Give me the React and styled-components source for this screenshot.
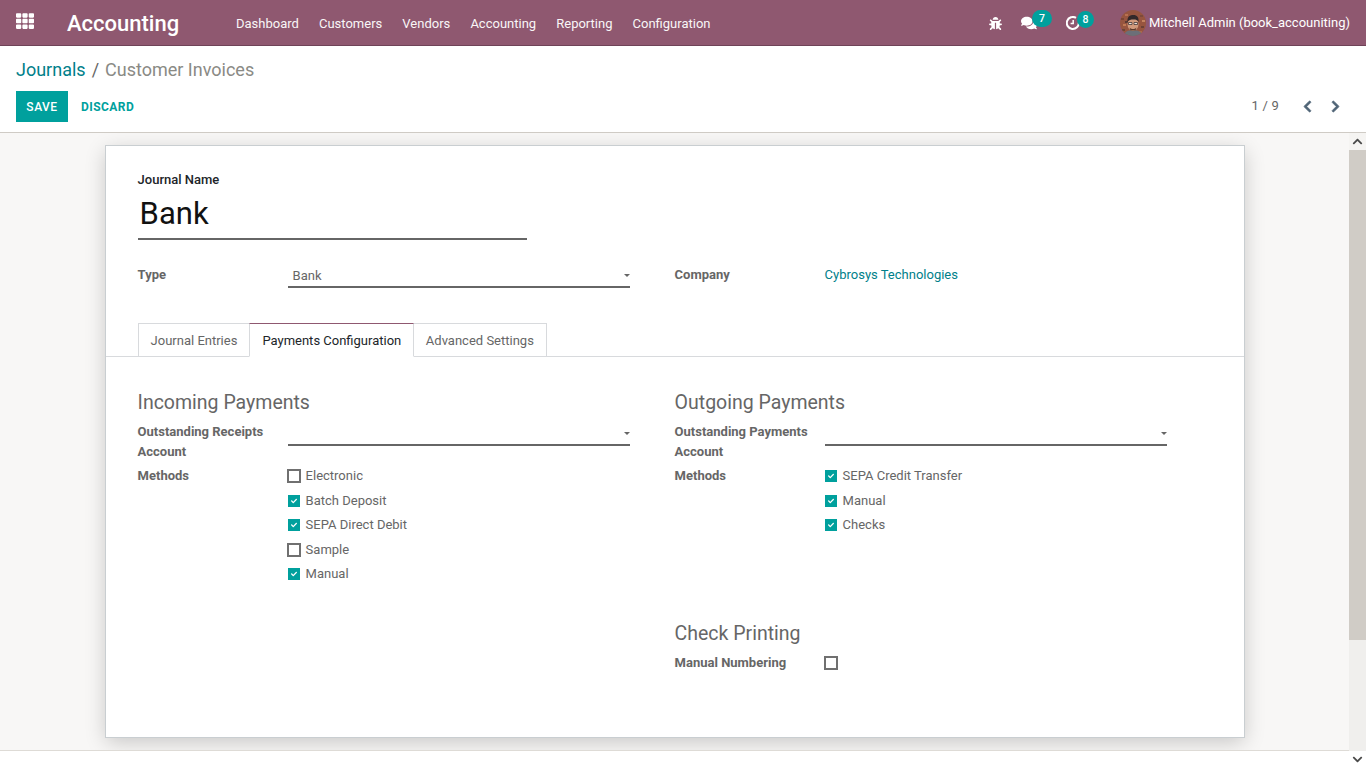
import React from 'react';
import styled, { createGlobalStyle } from 'styled-components';
import { FaTh, FaBug, FaComments, FaChevronLeft, FaChevronRight, FaChevronUp, FaChevronDown, FaCheck } from 'react-icons/fa';

const Global = createGlobalStyle`
  html, body { margin: 0; padding: 0; height: 100%; overflow: hidden; }
  body { font-family: Roboto, "Noto Sans", sans-serif; font-size: 13px; line-height: 20px; color: #666; background: #fff; }
  * { box-sizing: border-box; }
`;
const Page = styled.div`display: flex; flex-direction: column; height: 768px; width: 1366px;`;
const NavBar = styled.header`
  height: 46px; flex: none; display: flex; align-items: center; background: #8f5870; color: #fff;
  border-bottom: 1px solid #6f4358; padding: 0 16px;
`;
const AppGrid = styled.span`display: flex; font-size: 18px; width: 51px; margin-top: -3px;`;
const Brand = styled.span`font-size: 22px; font-weight: 500; width: 169px; margin-top: 2px;`;
const Menu = styled.nav`display: flex; gap: 20.1px; flex: 1; margin-top: 2px;`;
const MenuItem = styled.span`font-size: 13px; color: #fff; opacity: .95;`;
const Systray = styled.div`display: flex; align-items: center; margin-top: 1px;`;
const TrayIcon = styled.span`position: relative; display: flex; font-size: ${p => p.$size || 14}px; margin-right: ${p => p.$gap}px;`;
const Badge = styled.span`
  position: absolute; top: -5px; left: ${p => p.$left}px; min-width: ${p => p.$w}px; height: 17px; border-radius: 9px;
  background: #00a09d; color: #fff; font-size: 10.5px; font-weight: 500; line-height: 17px; text-align: center;
`;
const UserName = styled.span`font-size: 13px; margin-left: 3px; white-space: nowrap;`;

const ControlPanel = styled.section`
  height: 87px; flex: none; background: #fff; border-bottom: 1px solid #cfcbc5; padding: 0 16px;
  display: flex; flex-direction: column;
`;
const Breadcrumb = styled.div`font-size: 18px; line-height: 24px; margin-top: 12px; color: #8a8a85;`;
const Crumb = styled.span`color: #00808a;`;
const Sep = styled.span`color: #666; margin: 0 6px 0 6px;`;
const Actions = styled.div`display: flex; align-items: center; margin-top: 9px; height: 31px;`;
const SaveButton = styled.button`
  width: 52px; height: 31px; border: 0; background: #00a09d; color: #fff; font: 500 12px Roboto, sans-serif; letter-spacing: .5px; padding: 0;
`;
const DiscardButton = styled.button`
  margin-left: 13px; border: 0; background: none; color: #00a09d; font: 700 12px Roboto, sans-serif; padding: 0; letter-spacing: .45px;
`;
const Pager = styled.div`margin-left: auto; display: flex; align-items: center; color: #666; font-size: 13px; padding-right: 8px;`;
const PagerText = styled.span`margin-top: -2px; letter-spacing: .2px;`;
const PagerBtn = styled.span`
  display: flex; color: #4f6476; font-size: 13px; margin-left: ${p => p.$gap}px;
  svg { stroke: currentColor; stroke-width: 30; }
`;

const Body = styled.div`flex: 1; display: flex; min-height: 0;`;
const ContentArea = styled.main`flex: 1; background: #f8f7f6; border-bottom: 1px solid #dedbd6; padding: 12px 104px 0 105px; height: 618px; overflow: hidden;`;
const Scrollbar = styled.div`width: 17px; flex: none; background: #f0efed; display: flex; flex-direction: column; align-items: center;`;
const ScrollEnd = styled.span`height: 17px; flex: none; display: flex; align-items: center; justify-content: center; font-size: 11px; color: #4a4a4a; width: 100%; background: ${p => p.$bg || 'transparent'};`;
const ScrollThumb = styled.div`width: 100%; height: 490px; background: #d0ccc6;`;
const ScrollTrack = styled.div`flex: 1;`;
const LeftColumn = styled.div`flex: 1; display: flex; flex-direction: column;`;
const FooterStrip = styled.div`height: 17px; background: #fff;`;

const Sheet = styled.div`
  width: 1140px; height: 593px; background: #fff; border: 1px solid #c9ced1;
  box-shadow: 0 5px 20px -1px rgba(0,0,0,.2); padding-top: 24px;
`;
const Inset = styled.div`padding: 0 31.6px;`;
const NameLabel = styled.div`font-weight: 500; color: #212529; font-size: 13px;`;
const Title = styled.div`
  width: 389px; height: 50px; border-bottom: 2px solid #666; color: #111; font-size: 31px; line-height: 48px; padding-left: 2px;
`;
const TopGrid = styled.div`display: grid; grid-template-columns: 492px 492px; column-gap: 45px; margin-top: 25px; height: 48px;`;
const Row = styled.div`display: flex; align-items: flex-start;`;
const Label = styled.div`width: 150px; flex: none; font-weight: 700; color: #666; font-size: 13px;`;
const Select = styled.div`
  width: 342px; height: ${p => p.$h || 24}px; border-bottom: 2px solid #666; padding-left: 5px; padding-top: 1px; position: relative; color: #666;
`;
const Caret = styled.span`position: absolute; right: 0; bottom: 9.5px; width: 0; height: 0; border: 3.5px solid transparent; border-top-color: #666; border-bottom: 0;`;
const LinkValue = styled.span`color: #00808a;`;
const Tabs = styled.div`display: flex; padding-left: 32px; margin-top: 10px; border-bottom: 1px solid #d8dadd; height: 34px;`;
const Tab = styled.div`
  height: 34px; padding: 1px 12px 0 ${p => p.$active ? 12 : 11.6}px; display: flex; align-items: center; background: #fff; border: 1px solid #d8dadd;
  border-left-width: ${p => p.$first ? 1 : 0}px; color: ${p => p.$active ? '#212529' : '#666'};
  ${p => p.$active && `border-top-color: #8f5870; border-bottom-color: #fff; margin-left:-1px; border-left-width:1px;`}
`;
const TabBody = styled.div`padding: 32px 31.6px 0; display: grid; grid-template-columns: 492px 492px; column-gap: 45px;`;
const Column = styled.div`display: flex; flex-direction: column;`;
const Heading = styled.h2`margin: 0; font-weight: 400; font-size: 19.5px; line-height: 27px; color: #666;`;
const FormRow = styled.div`display: flex; margin-top: ${p => p.$mt || 0}px;`;
const Checks = styled.div`display: flex; flex-direction: column;`;
const CheckRow = styled.div`height: 24.5px; display: flex; align-items: flex-start; line-height: 20px;`;
const Box = styled.span`
  flex: none; display: flex; align-items: center; justify-content: center; color: #fff; font-size: 6px;
  width: ${p => p.$on ? 12 : 14}px; height: ${p => p.$on ? 12 : 14}px;
  margin: ${p => p.$on ? '4px 6px 0 0' : '3px 5px 0 -1px'};
  border: ${p => p.$on ? '0' : '2px solid #707070'}; background: ${p => p.$on ? '#00a09d' : '#fff'};
`;
const Spacer = styled.div`height: ${p => p.$h}px;`;

const bricks = [[1,8,'#7a4434'],[3,14,'#c07a55'],[2,19,'#6d4438'],[5,4,'#b8704e'],[20,5,'#7d4a3a'],[22,10,'#c48360'],[21,16,'#6b4135'],[19,21,'#a8694c'],[5,11,'#5c3a33']];
const Avatar = () => (
  <svg width="26" height="26" viewBox="0 0 26 26">
    <defs><clipPath id="av"><circle cx="13" cy="13" r="13" /></clipPath></defs>
    <g clipPath="url(#av)">
      <rect width="26" height="26" fill="#97553f" />
      {bricks.map(([x, y, c]) => <rect key={`${x}-${y}`} x={x} y={y} width="3" height="2" fill={c} />)}
      <path d="M4 26c0-4 4-6 9-6s9 2 9 6z" fill="#6c6f78" />
      <ellipse cx="13" cy="14" rx="5.5" ry="7" fill="#d19a7c" />
      <path d="M7.5 12C7 6 10 5 13.5 5s5.5 2 5 7c-1-2-2.500-2.500-5-2.500s-5 .5-6 2.500z" fill="#33292a" />
      <path d="M8.500 12.500h3.500v2h-3.500zM14 12.500h3.500v2H14z" fill="#e9dfd8" stroke="#33292a" strokeWidth=".7" />
      <path d="M9.500 17.500c2 2 5 2 7 0l-1 3h-5z" fill="#5a3a2c" />
    </g>
  </svg>
);
const ClockIcon = () => (
  <svg width="14" height="14" viewBox="0 0 14 14" fill="none" stroke="#fff">
    <path d="M10 1.900A6 6 0 1 0 12.800 6.500" strokeWidth="2" />
    <path d="M7.200 4v3.600H4.600" strokeWidth="1.500" />
  </svg>
);

const Check = ({ on, children }) => (
  <CheckRow><Box $on={on}>{on && <FaCheck />}</Box>{children}</CheckRow>
);

export default function App() {
  return (
    <Page>
      <Global />
      <NavBar>
        <AppGrid><FaTh /></AppGrid>
        <Brand>Accounting</Brand>
        <Menu>
          {['Dashboard', 'Customers', 'Vendors', 'Accounting', 'Reporting', 'Configuration'].map(m => <MenuItem key={m}>{m}</MenuItem>)}
        </Menu>
        <Systray>
          <TrayIcon $size={13} $gap={19}><FaBug /></TrayIcon>
          <TrayIcon $size={16} $gap={29}><FaComments /><Badge $left={11} $w={20}>7</Badge></TrayIcon>
          <TrayIcon $gap={40}><ClockIcon /><Badge $left={11} $w={17}>8</Badge></TrayIcon>
          <Avatar />
          <UserName>Mitchell Admin (book_accouniting)</UserName>
        </Systray>
      </NavBar>
      <ControlPanel>
        <Breadcrumb><Crumb>Journals</Crumb><Sep>/</Sep>Customer Invoices</Breadcrumb>
        <Actions>
          <SaveButton>SAVE</SaveButton>
          <DiscardButton>DISCARD</DiscardButton>
          <Pager><PagerText>1 / 9</PagerText><PagerBtn $gap={22}><FaChevronLeft /></PagerBtn><PagerBtn $gap={15}><FaChevronRight /></PagerBtn></Pager>
        </Actions>
      </ControlPanel>
      <Body>
        <LeftColumn>
          <ContentArea>
            <Sheet>
              <Inset>
                <NameLabel>Journal Name</NameLabel>
                <Title>Bank</Title>
                <TopGrid>
                  <Row><Label>Type</Label><Select $h={23}>Bank<Caret /></Select></Row>
                  <Row><Label>Company</Label><LinkValue>Cybrosys Technologies</LinkValue></Row>
                </TopGrid>
              </Inset>
              <Tabs>
                <Tab $first>Journal Entries</Tab>
                <Tab $active>Payments Configuration</Tab>
                <Tab>Advanced Settings</Tab>
              </Tabs>
              <TabBody>
                <Column>
                  <Heading>Incoming Payments</Heading>
                  <FormRow $mt={6}><Label>Outstanding Receipts Account</Label><Select><Caret /></Select></FormRow>
                  <FormRow $mt={4}>
                    <Label>Methods</Label>
                    <Checks>
                      <Check>Electronic</Check>
                      <Check on>Batch Deposit</Check>
                      <Check on>SEPA Direct Debit</Check>
                      <Check>Sample</Check>
                      <Check on>Manual</Check>
                    </Checks>
                  </FormRow>
                </Column>
                <Column>
                  <Heading>Outgoing Payments</Heading>
                  <FormRow $mt={6}><Label>Outstanding Payments Account</Label><Select><Caret /></Select></FormRow>
                  <FormRow $mt={4}>
                    <Label>Methods</Label>
                    <Checks>
                      <Check on>SEPA Credit Transfer</Check>
                      <Check on>Manual</Check>
                      <Check on>Checks</Check>
                    </Checks>
                  </FormRow>
                  <Spacer $h={80} />
                  <Heading>Check Printing</Heading>
                  <FormRow $mt={6}><Label>Manual Numbering</Label><Check /></FormRow>
                </Column>
              </TabBody>
            </Sheet>
          </ContentArea>
          <FooterStrip />
        </LeftColumn>
        <Scrollbar>
          <ScrollEnd $bg="#f5f4f2"><FaChevronUp /></ScrollEnd>
          <ScrollThumb />
          <ScrollTrack />
          <ScrollEnd $bg="#fff"><FaChevronDown /></ScrollEnd>
        </Scrollbar>
      </Body>
    </Page>
  );
}
